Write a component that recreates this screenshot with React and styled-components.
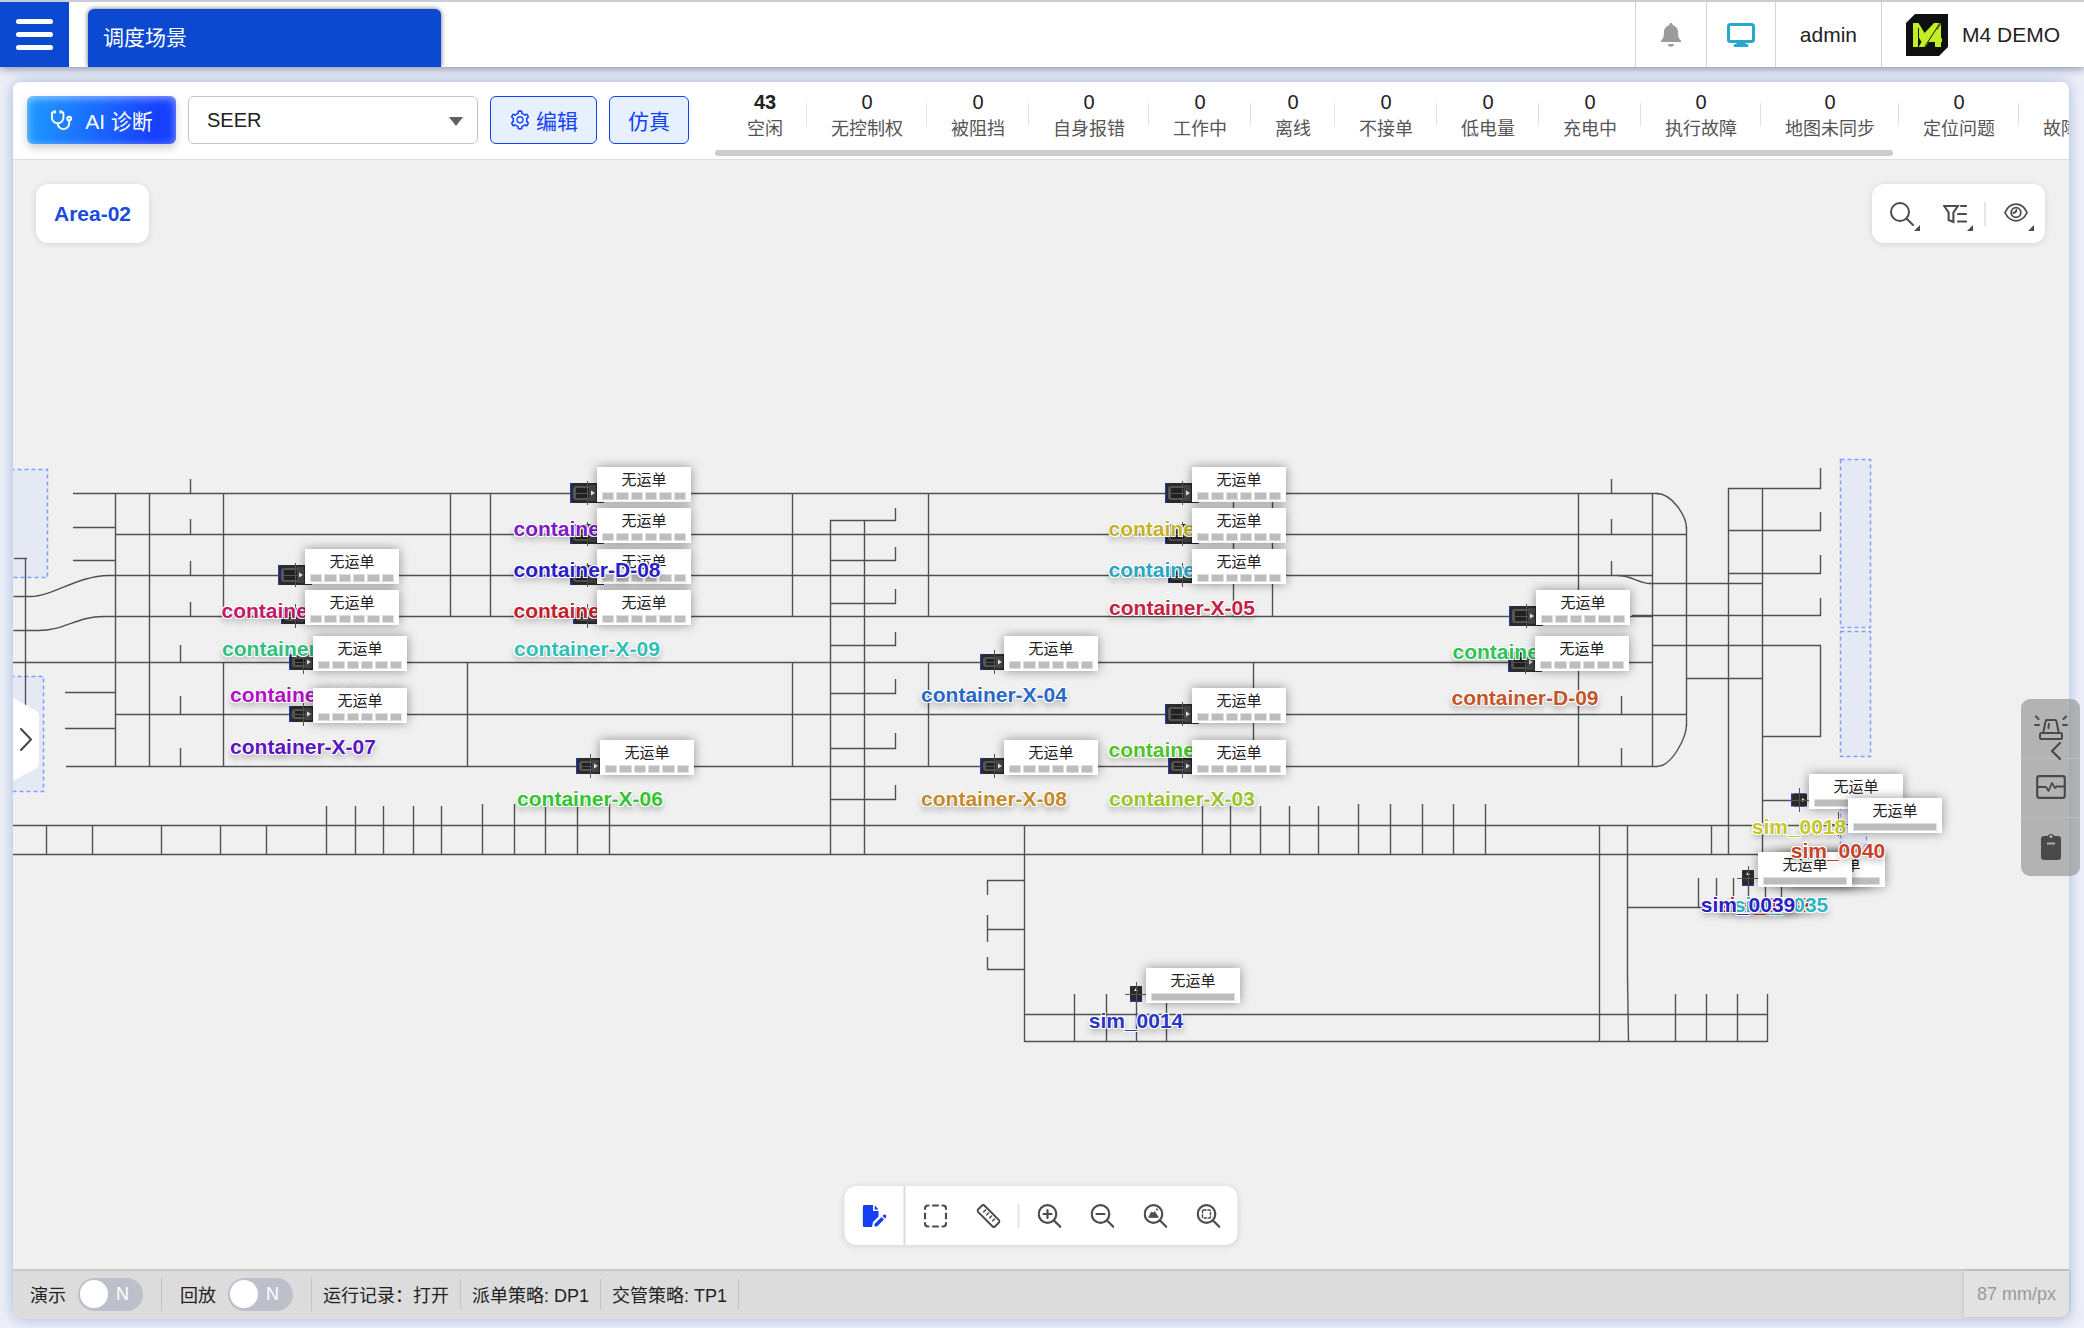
import React from "react";
import styled, { createGlobalStyle, css } from "styled-components";
import { AiOutlineSetting } from "react-icons/ai";
import { LuStethoscope } from "react-icons/lu";

const GlobalStyle = createGlobalStyle`
  *, *::before, *::after { box-sizing: border-box; }
  body {
    margin: 0;
    background: #eeeff8;
    color: #222;
    font-family: "Liberation Sans", Arial, "Noto Sans CJK SC", sans-serif;
  }
  button, select, input { font: inherit; color: inherit; }
  svg { display: block; }
`;

const Page = styled.div`
  min-height: 100vh;
  display: flex;
  flex-direction: column;
`;

/* ---------- header ---------- */

const Header = styled.header`
  display: flex;
  height: 67px;
  flex: none;
  border-top: 2px solid #c9cdd8;
  background: #fff;
  box-shadow: 0 2px 8px rgba(70, 85, 120, 0.6);
`;

const MenuButton = styled.button`
  width: 69px;
  border: 0;
  padding: 0 16px;
  background: #0b49d1;
  display: flex;
  flex-direction: column;
  justify-content: center;
  gap: 8px;
`;

const MenuBar = styled.span`
  display: block;
  height: 5px;
  border-radius: 3px;
  background: #fff;
`;

const SceneTab = styled.a`
  display: flex;
  align-items: center;
  width: 353px;
  margin: 7px auto 0 19px;
  padding: 0 0 4px 15px;
  border-radius: 6px 6px 0 0;
  background: #0b49d1;
  box-shadow: 0 0 5px rgba(0, 0, 0, 0.6);
  clip-path: inset(-6px -6px 0 -6px);
  color: #fff;
  font-size: 21px;
  text-decoration: none;
`;

const HeaderCell = styled.button`
  display: flex;
  align-items: center;
  justify-content: center;
  gap: 14px;
  border: 0;
  border-left: 1px solid #d4d4d4;
  padding: 0 ${(p) => p.$pad}px;
  background: none;
  font-size: 21px;
  white-space: nowrap;
`;

/* ---------- main panel ---------- */

const Panel = styled.main`
  position: relative;
  flex: 1;
  display: flex;
  flex-direction: column;
  margin: 15px 15px 9px 13px;
  border-radius: 8px;
  background: #f0f0f0;
  box-shadow: 0 0 14px rgba(70, 120, 190, 0.45);
`;

const Toolbar = styled.div`
  display: flex;
  height: 78px;
  flex: none;
  align-items: flex-start;
  gap: 12px;
  padding: 14px 0 0 14px;
  border-bottom: 1px solid #dedede;
  border-radius: 8px 8px 0 0;
  background: #fff;
`;

const control = css`
  flex: none;
  height: 48px;
  border-radius: 6px;
  font-size: 21px;
`;

const AiButton = styled.button`
  ${control}
  display: flex;
  align-items: center;
  justify-content: center;
  gap: 12px;
  width: 149px;
  border: 0;
  color: #fff;
  background: linear-gradient(100deg, #1e97ff 5%, #1640ff 85%);
  box-shadow: inset 0 2px 8px rgba(255, 255, 255, 0.55), 0 4px 8px rgba(0, 0, 0, 0.2);
`;

const SelectWrap = styled.div`
  position: relative;
  flex: none;
  width: 290px;

  &::after {
    content: "";
    position: absolute;
    right: 15px;
    top: 21px;
    border: 7px solid transparent;
    border-top: 9px solid #5c5f66;
    border-bottom: 0;
    pointer-events: none;
  }
`;

const SceneSelect = styled.select`
  ${control}
  width: 100%;
  appearance: none;
  padding: 0 18px;
  border: 1px solid #bfc4d0;
  background: #fff;
  font-size: 20px;
`;

const OutlineButton = styled.button`
  ${control}
  display: flex;
  align-items: center;
  justify-content: center;
  gap: 5px;
  padding: 0 18px;
  border: 1px solid #1240f5;
  background: #e7f0ff;
  color: #1240f5;
`;

const StatScroller = styled.div`
  flex: 1;
  min-width: 0;
  height: 76px;
  margin: -14px 0 0 14px;
  padding-top: 7px;
  overflow: hidden;
`;

const StatList = styled.ul`
  display: flex;
  margin: 0;
  padding: 0 0 0 8px;
  list-style: none;
`;

const Stat = styled.li`
  flex: none;
  display: flex;
  flex-direction: column;
  align-items: center;
  padding: 0 24px;
  background: linear-gradient(#e2e2e2, #e2e2e2) right 0 top 14px / 1px 23px no-repeat;
`;

const StatValue = styled.strong`
  font-size: 20px;
  line-height: 26px;
  font-weight: ${(p) => (p.$on ? 700 : 400)};
  color: #222;
`;

const StatName = styled.span`
  font-size: 18px;
  line-height: 29px;
  color: #555;
`;

const ScrollThumb = styled.div`
  width: 87%;
  height: 6px;
  margin-top: 6px;
  border-radius: 3px;
  background: #cdcdcd;
`;

/* ---------- canvas ---------- */

const Canvas = styled.section`
  position: relative;
  flex: 1;
  overflow: hidden;
  background: #f0f0f0;
`;

const Tracks = styled.svg`
  position: absolute;
  inset: 0;
  width: 100%;
  height: 100%;
`;

const Floating = styled.div`
  position: absolute;
  display: flex;
  align-items: center;
  height: 59px;
  border-radius: 12px;
  background: #fff;
  box-shadow: 0 1px 6px rgba(0, 0, 0, 0.12);
`;

const AreaBox = styled(Floating)`
  left: 23px;
  top: 24px;
`;

const AreaButton = styled.button`
  height: 100%;
  border: 0;
  padding: 0 18px;
  background: none;
  color: #1a4be0;
  font-size: 21px;
  font-weight: 700;
`;

const ViewTools = styled(Floating)`
  right: 24px;
  top: 24px;
  padding: 0 3px;
`;

const ZoomTools = styled(Floating)`
  left: 50%;
  bottom: 24px;
  transform: translateX(-50%);
`;

const ToolGroup = styled.div`
  display: flex;
  align-items: center;
  height: 100%;
  padding: 0 3px;

  & + & { border-left: 2px solid #dcdcdc; }
`;

const ToolButton = styled.button`
  position: relative;
  display: grid;
  place-items: center;
  width: 53px;
  height: 53px;
  border: 0;
  padding: 0;
  background: none;
  color: ${(p) => (p.$active ? "#153ff5" : "#4c4c4c")};

  ${(p) =>
    p.$menu &&
    css`
      &::after {
        content: "";
        position: absolute;
        right: 8px;
        bottom: 9px;
        border-left: 6px solid transparent;
        border-bottom: 6px solid #4c4c4c;
      }
    `}
`;

const ToolDivider = styled.span`
  width: 2px;
  height: 24px;
  margin: 0 3px;
  background: #e2e5ea;
`;

const DrawerHandle = styled.button`
  position: absolute;
  left: 0;
  top: 538px;
  width: 26px;
  height: 83px;
  border: 0;
  padding: 0;
  background: none;
`;

const Dock = styled.nav`
  position: absolute;
  right: -11px;
  top: 617px;
  width: 59px;
  border-radius: 9px;
  overflow: hidden;
  background: rgba(150, 150, 150, 0.68);
`;

const DockButton = styled.button`
  display: grid;
  place-items: center;
  width: 100%;
  height: 59px;
  border: 0;
  padding: 0 0 2px;
  background: none;
  color: #4a4a4a;

  & + & { border-top: 1px solid #bdbdbd; }
`;

const DockChevron = styled.svg`
  position: absolute;
  right: 19px;
  top: 43px;
`;

/* ---------- vehicles ---------- */

const Anchor = styled.div`
  position: absolute;
  left: ${(p) => p.$x}px;
  top: ${(p) => p.$y}px;
`;

const VehicleName = styled.span`
  position: absolute;
  top: ${(p) => p.$top}px;
  left: 0;
  transform: translateX(-50%);
  color: ${(p) => p.$color};
  font-size: 21px;
  line-height: 24px;
  font-weight: 700;
  white-space: nowrap;
  text-shadow: 1px 1px 0 #fff, -1px -1px 0 #fff, 1px -1px 0 #fff, -1px 1px 0 #fff,
    0 4px 6px rgba(0, 0, 0, 0.35);
`;

const OrderCard = styled.div`
  position: absolute;
  left: 10px;
  top: -26px;
  width: 94px;
  height: 35px;
  padding: 2px 5px 0;
  background: #fff;
  box-shadow: 0 0 10px rgba(0, 0, 0, 0.4);
  color: #222;
  font-size: 15px;
  line-height: 22px;
  text-align: center;
`;

const Slots = styled.div`
  display: grid;
  grid-template-columns: repeat(${(p) => p.$count}, 1fr);
  gap: 2px;
  margin-top: 1px;
`;

const Slot = styled.span`
  height: 8px;
  border: 1px solid #dedede;
  background: #bdbdbd;
`;

/* ---------- status bar ---------- */

const StatusBar = styled.footer`
  display: flex;
  align-items: center;
  flex: none;
  height: 50px;
  padding: 0 0 2px 17px;
  border-top: 2px solid #c9c9c9;
  border-radius: 0 0 8px 8px;
  background: #dcdcdc;
  font-size: 18px;
`;

const StatusCell = styled.div`
  display: flex;
  align-items: center;
  height: ${(p) => (p.$switch ? 33 : 30)}px;
  padding: 0 ${(p) => (p.$switch ? 18 : 11)}px 0 ${(p) => (p.$first ? 0 : p.$switch ? 18 : 11)}px;
  border-right: 1px solid #c2c2c2;
  white-space: nowrap;
`;

const SwitchLabel = styled.label`
  display: flex;
  align-items: center;
  gap: 12px;
`;

const SwitchTrack = styled.span`
  display: flex;
  align-items: center;
  gap: 8px;
  width: 65px;
  height: 33px;
  padding-left: 2px;
  border-radius: 17px;
  background: #bcc0ca;
  color: #fff;
`;

const SwitchInput = styled.input`
  appearance: none;
  width: 28px;
  height: 28px;
  margin: 0;
  border-radius: 50%;
  background: #fff;
`;

const Scale = styled.output`
  display: flex;
  align-items: center;
  align-self: stretch;
  margin-left: auto;
  padding: 0 13px;
  border-radius: 0 0 8px 0;
  background: #e2e2e2;
  box-shadow: 0 0 4px rgba(0, 0, 0, 0.15);
  color: #999;
`;

/* ---------- icons ---------- */

const stroke = { fill: "none", stroke: "currentColor", strokeLinecap: "round", strokeLinejoin: "round" };

const BellIcon = () => (
  <svg width="22" height="24" viewBox="0 0 22 24" fill="#9b9b9b">
    <path d="M11 0c1 0 1.600.700 1.600 1.600v.700c3.300.700 5.500 3.400 5.500 7.200 0 4.700 1.100 6.500 2.800 8 .500.500.200 1.600-.700 1.600H1.800c-.900 0-1.200-1.100-.700-1.600 1.700-1.500 2.800-3.300 2.800-8 0-3.800 2.200-6.500 5.500-7.200v-.700C9.400.700 10 0 11 0z" />
    <path d="M7.800 21h6.400c0 1.600-1.400 2.800-3.200 2.800S7.800 22.600 7.800 21z" />
  </svg>
);

const MonitorIcon = () => (
  <svg width="28" height="24" viewBox="0 0 28 24" fill="none" stroke="#27a9cf">
    <rect x="1.500" y="1.500" width="25" height="17" rx="2" strokeWidth="3" />
    <path d="M14 19v3M8 22.500h12" strokeWidth="3" strokeLinecap="round" />
    <path d="M9.500 20.500h9" strokeWidth="3" />
  </svg>
);

const LogoIcon = () => (
  <svg width="42" height="42" viewBox="0 0 42 42">
    <path d="M9 0h33v33l-9 9H0V9z" fill="#0d0f10" />
    <path d="M7 33V9h5.500l6 10L28 9h7L19.500 33h-7l3-5-3.500-6v11z" fill="#c3ee26" />
    <path d="M35 10v14h1v4h-1v5h-6v-5h-8l2-4 8-10v10h-2l-3 0" fill="#c3ee26" />
    <path d="M12.500 14v19M34 9 18 34" fill="none" stroke="#0d0f10" />
  </svg>
);

const SearchIcon = () => (
  <svg width="24" height="24" viewBox="0 0 24 24" {...stroke} strokeWidth="2">
    <circle cx="10" cy="10" r="9" />
    <path d="m16.500 16.500 6.500 6.500" />
  </svg>
);

const FilterIcon = () => (
  <svg width="24" height="24" viewBox="0 0 24 24" {...stroke} strokeWidth="2.100" strokeLinejoin="miter">
    <path d="M1.200 4h13.600l-4.400 6.500V20l-4.800-2V10.500z" />
    <path d="M18 4h5M15 12h8M15 19.500h8" />
  </svg>
);

const EyeIcon = () => (
  <svg width="24" height="24" viewBox="0 0 24 24" {...stroke} strokeWidth="1.800">
    <path d="M1 10.500C3.500 5 7.500 2.200 12 2.200s8.500 2.800 11 8.300c-2.500 5.500-6.500 8.300-11 8.300S3.500 16 1 10.500z" />
    <circle cx="12" cy="10.500" r="4.800" />
    <path d="M12.500 8c-.300 1.800-1 2.700-3 3" />
  </svg>
);

const EditFileIcon = () => (
  <svg width="24" height="24" viewBox="0 0 24 24" fill="currentColor">
    <path d="M2 1h8.500v6H16v5.500l-5.500 5.500L9.500 23H2c-1 0-1.800-.8-1.800-1.800V2.800C.2 1.800 1 1 2 1z" />
    <path d="m12.200 1.200 3.800 4.300h-3.800zM12 20l7-7 2.500 2.500-7 7H12zM20 12l1.200-1.200c.5-.5 1.200-.5 1.700 0l.8.8c.5.500.5 1.200 0 1.700l-1.200 1.200z" />
  </svg>
);

const MarqueeIcon = () => (
  <svg width="24" height="24" viewBox="0 0 24 24" {...stroke} strokeWidth="2.200">
    <path d="M1.500 5V4.500a3 3 0 0 1 3-3H5M9.500 1.500h5M19 1.500h.5a3 3 0 0 1 3 3V5M22.500 9.500v5M22.500 19v.5a3 3 0 0 1-3 3H19M14.500 22.500h-5M5 22.500h-.5a3 3 0 0 1-3-3V19M1.500 14.500v-5" />
  </svg>
);

const RulerIcon = () => (
  <svg width="24" height="24" viewBox="0 0 24 24" {...stroke} strokeWidth="2">
    <rect x="0" y="7.500" width="24" height="9" rx="2" transform="rotate(45 12 12)" />
    <path d="m9 6-1.800 1.800M12 9l-1.800 1.800M15 12l-1.800 1.800M18 15l-1.800 1.800" strokeWidth="1.600" />
  </svg>
);

const LensIcon = ({ children }) => (
  <svg width="24" height="24" viewBox="0 0 24 24" {...stroke} strokeWidth="2.200">
    <circle cx="10" cy="10" r="8.800" />
    <path d="m16.500 16.500 6.300 6.300" />
    {children}
  </svg>
);

const AlarmIcon = () => (
  <svg width="34" height="26" viewBox="0 0 34 26" {...stroke} strokeWidth="2">
    <path d="M9.500 16.500 11.500 6.500c.2-1 .9-1.500 1.800-1.500h7.400c.9 0 1.600.5 1.800 1.500l2 10M15 9l-.6 4" />
    <rect x="6" y="18" width="22" height="6" rx="1.500" />
    <path d="M2 1.500 4.500 4M1 10h4M32 1.500 29.500 4M33 10h-4" />
  </svg>
);

const PulseIcon = () => (
  <svg width="30" height="24" viewBox="0 0 30 24" {...stroke} strokeWidth="2.200">
    <rect x="1.200" y="1.200" width="27.600" height="21.600" rx="2" />
    <path d="M2 12h8l2.500 4 3.500-8 3 5 1.500-1.500H28" strokeWidth="1.800" />
  </svg>
);

const ClipboardIcon = () => (
  <svg width="22" height="28" viewBox="0 0 22 28">
    <path d="M4 4h3.500a4 4 0 0 1 7 0H18a3 3 0 0 1 3 3v18a3 3 0 0 1-3 3H4a3 3 0 0 1-3-3V7a3 3 0 0 1 3-3z" fill="currentColor" />
    <path d="M7 11.500h8" stroke="#b0b0b0" strokeWidth="2" />
    <circle cx="11" cy="4.500" r="1.500" fill="#b0b0b0" />
  </svg>
);

/* ---------- data ---------- */

const stats = [
  [43, "空闲"], [0, "无控制权"], [0, "被阻挡"], [0, "自身报错"], [0, "工作中"], [0, "离线"], [0, "不接单"],
  [0, "低电量"], [0, "充电中"], [0, "执行故障"], [0, "地图未同步"], [0, "定位问题"], [0, "故障未恢复"],
];

// World coordinate of the canvas' upper left corner.
const ORIGIN = { x: 13, y: 160 };

// Horizontal lanes: [y, from, to]
const lanes = [
  [493, 73, 1658], [527, 73, 115], [534, 115, 1686], [560, 73, 115], [575, 108, 1652], [616, 103, 1652],
  [662, 13, 1652], [692, 65, 115], [714, 115, 1686], [728, 65, 115], [766, 66, 1656], [558, 14, 26],
  [825, 13, 1840], [854, 13, 1762],
  [520, 830, 895], [560, 830, 895], [603, 830, 895], [645, 830, 895], [693, 830, 895], [748, 830, 895], [799, 830, 895],
  [583, 1649, 1762], [615, 1632, 1820], [488, 1728, 1820], [530, 1728, 1820], [573, 1728, 1820],
  [645, 1652, 1820], [736, 1762, 1820], [678, 1686, 1762], [800, 1762, 1800], [907, 1627, 1782],
  [1014, 1024, 1767], [1041, 1024, 1767], [880, 987, 1024], [929, 987, 1024], [969, 987, 1024],
];

// Vertical lanes: [from, to, ...x]
const aisles = [
  [493, 766, 115, 149, 1652], [493, 616, 223, 450, 490, 792, 928, 1233, 1272, 1578],
  [662, 766, 223, 467, 792, 928, 1253, 1578],
  [479, 493, 190, 1611], [519, 534, 190, 1611], [561, 575, 190, 1611], [602, 616, 190],
  [645, 662, 180], [696, 714, 180, 1621], [748, 766, 180, 1621], [558, 760, 25],
  [825, 854, 46, 92, 161, 220, 266, 1711],
  [806, 854, 326, 355, 383, 413, 441, 1202, 1230, 1260, 1289, 1318],
  [804, 854, 482, 514, 545, 577, 609, 1358, 1390, 1422, 1453, 1485],
  [520, 854, 830, 864], [508, 520, 895], [547, 560, 895], [589, 603, 895], [632, 645, 895],
  [679, 693, 895], [733, 748, 895], [785, 799, 895],
  [825, 1041, 1024, 1599], [825, 976, 1627], [527, 725, 1686], [488, 854, 1728, 1762],
  [468, 488, 1820], [512, 530, 1820], [555, 573, 1820], [598, 615, 1820], [645, 736, 1820],
  [878, 907, 1698, 1716, 1733, 1748, 1765, 1781], [994, 1041, 1074, 1106, 1136, 1166, 1675, 1706, 1737, 1767],
  [880, 894, 987], [915, 941, 987], [957, 969, 987],
];

const bends = [
  "M13 596H30C52 596 78 575 108 575",
  "M13 630H38C64 630 76 616 103 616",
  "M1656 493C1672 493 1686 516 1686 528",
  "M1656 766C1672 766 1686 736 1686 724",
  "M1617 575C1632 575 1638 583 1650 583",
  "M1627 976 1628 1041",
];

const zones = [
  [-4, 469, 51, 108], [-4, 676, 47, 115], [1840, 459, 30, 168], [1840, 631, 30, 125], [1840, 806, 26, 39],
];

// [kind, x, y, name, colour], painted in this order
const vehicles = [
  ["D", 295, 575, "container-D-05", "#c2186b"],
  ["X", 295, 616, "container-X-10", "#2fc07f"],
  ["X", 303, 662, "container-X-02", "#b012c4"],
  ["X", 303, 714, "container-X-07", "#5a17c0"],
  ["D", 587, 493, "container-D-03", "#7d1bc4"],
  ["D", 587, 575, "container-D-07", "#c21f2c"],
  ["D", 587, 534, "container-D-08", "#2a1bc4"],
  ["X", 587, 616, "container-X-09", "#2fbfb6"],
  ["X", 590, 766, "container-X-06", "#35c42f"],
  ["X", 994, 662, "container-X-04", "#2a68c4"],
  ["X", 994, 766, "container-X-08", "#c48a2a"],
  ["D", 1182, 493, "container-D-01", "#c4b22a"],
  ["D", 1182, 534, "container-D-02", "#2aa6c4"],
  ["X", 1182, 575, "container-X-05", "#c41f45"],
  ["D", 1182, 714, "container-D-04", "#4dc42a"],
  ["X", 1182, 766, "container-X-03", "#9ac42a"],
  ["D", 1526, 616, "container-D-06", "#2fc455"],
  ["D", 1525, 662, "container-D-09", "#c4552a"],
  ["V", 1136, 994, "sim_0014", "#2a35c4"],
  ["V", 1765, 878, "sim_0037", "#c4352a"],
  ["V", 1781, 878, "sim_0035", "#2fb4c4"],
  ["V", 1748, 878, "sim_0039", "#2a20c4"],
  ["H", 1799, 800, "sim_0018", "#c4c82a"],
  ["P", 1838, 824, "sim_0040", "#c4432a"],
];

// P is a vehicle known only by its position: it has a cross and no body.
const kinds = {
  D: { w: 34, h: 20, slots: 6, label: 24 },
  X: { w: 28, h: 16, slots: 6, label: 21 },
  H: { w: 16, h: 13, slots: 1, label: 15 },
  V: { w: 16, h: 12, slots: 1, label: 15, turn: -90 },
  P: { w: 0, h: 0, slots: 1, label: 15 },
};

function VehicleBody({ data: [kind, x, y] }) {
  const k = kinds[kind];
  const large = k.slots > 1;
  return (
    <g transform={`translate(${x} ${y})`}>
      {k.w > 0 && (
        <g transform={`rotate(${k.turn || 0})`}>
          <rect x={-k.w / 2} y={-k.h / 2} width={k.w} height={k.h} fill="#2038c0" />
          <rect x={1 - k.w / 2} y={-k.h / 2} width={k.w - 1} height={k.h} rx="3" fill="#2b2b2b" />
          {large && (
            <>
              <rect x={3 - k.w / 2} y={3 - k.h / 2} width={k.w / 2} height={k.h - 6} rx="3" fill="#555" />
              <rect x={6 - k.w / 2} y={5 - k.h / 2} width={k.w / 2 - 3} height={k.h - 10} fill="#222" />
              <path d={`M${6 - k.w / 2} .5H3`} stroke="#555" />
              <rect x="2" y={2 - k.h / 2} width="7" height={k.h - 4} fill="#484848" />
            </>
          )}
          <path d={large ? "M4-2.500 8 0 4 2.500z" : "M3-2 6 0 3 2z"} fill="#eee" />
        </g>
      )}
      <path d={large ? "M.5-12V12" : "M.5-12V12M-11 .5H11"} stroke="#555" strokeWidth="1" />
    </g>
  );
}

function Vehicle({ data: [kind, x, y, name, color] }) {
  const k = kinds[kind];
  return (
    <Anchor $x={x - ORIGIN.x} $y={y - ORIGIN.y}>
      <VehicleName $top={k.label} $color={color}>{name}</VehicleName>
      <OrderCard>
        无运单
        <Slots $count={k.slots}>
          {Array.from({ length: k.slots }, (_, i) => <Slot key={i} />)}
        </Slots>
      </OrderCard>
    </Anchor>
  );
}

function MapTracks() {
  return (
    <Tracks aria-hidden="true">
      <g transform={`translate(${-ORIGIN.x} ${-ORIGIN.y})`}>
        {zones.map(([x, y, w, h]) => (
          <rect key={`${x}-${y}`} x={x + 0.5} y={y + 0.5} width={w} height={h}
            fill="#e5e9f3" stroke="#7f9cff" strokeWidth="1.500" strokeDasharray="4 3" />
        ))}
        <g fill="none" stroke="#505050" strokeWidth="1.400">
          {lanes.map(([y, a, b]) => <path key={`${y}-${a}`} d={`M${a} ${y + 0.5}H${b + 1}`} />)}
          {aisles.flatMap(([a, b, ...xs]) =>
            xs.map((x) => <path key={`${x}-${a}`} d={`M${x + 0.5} ${a}V${b + 1}`} />)
          )}
          <g transform="translate(.5 .5)">
            {bends.map((d) => <path key={d} d={d} />)}
          </g>
        </g>
        {vehicles.map((v) => <VehicleBody key={v[3]} data={v} />)}
      </g>
    </Tracks>
  );
}

function Switch({ id, label }) {
  return (
    <SwitchLabel htmlFor={id}>
      {label}
      <SwitchTrack>
        <SwitchInput id={id} type="checkbox" role="switch" />
        N
      </SwitchTrack>
    </SwitchLabel>
  );
}

export default function App() {
  return (
    <Page>
      <GlobalStyle />
      <Header>
        <MenuButton aria-label="菜单"><MenuBar /><MenuBar /><MenuBar /></MenuButton>
        <SceneTab href="#scene">调度场景</SceneTab>
        <HeaderCell $pad={24} aria-label="通知"><BellIcon /></HeaderCell>
        <HeaderCell $pad={20} aria-label="监控"><MonitorIcon /></HeaderCell>
        <HeaderCell $pad={24}>admin</HeaderCell>
        <HeaderCell $pad={24}><LogoIcon />M4 DEMO</HeaderCell>
      </Header>

      <Panel>
        <Toolbar>
          <AiButton><LuStethoscope size={23} />AI 诊断</AiButton>
          <SelectWrap>
            <SceneSelect aria-label="场景" defaultValue="SEER">
              <option>SEER</option>
            </SceneSelect>
          </SelectWrap>
          <OutlineButton><AiOutlineSetting size={22} />编辑</OutlineButton>
          <OutlineButton>仿真</OutlineButton>
          <StatScroller>
            <StatList>
              {stats.map(([value, name]) => (
                <Stat key={name}>
                  <StatValue $on={value > 0}>{value}</StatValue>
                  <StatName>{name}</StatName>
                </Stat>
              ))}
            </StatList>
            <ScrollThumb />
          </StatScroller>
        </Toolbar>

        <Canvas>
          <MapTracks />
          {vehicles.map((v) => <Vehicle key={v[3]} data={v} />)}

          <AreaBox><AreaButton>Area-02</AreaButton></AreaBox>

          <ViewTools>
            <ToolButton $menu aria-label="搜索"><SearchIcon /></ToolButton>
            <ToolButton $menu aria-label="筛选"><FilterIcon /></ToolButton>
            <ToolDivider />
            <ToolButton $menu aria-label="显示"><EyeIcon /></ToolButton>
          </ViewTools>

          <DrawerHandle aria-label="展开">
            <svg width="26" height="83" viewBox="0 0 26 83">
              <path d="M0 0 22 12q4 2 4 6v47q0 4-4 6L0 83z" fill="#fff" />
              <path d="m8 31 10 10.500L8 52" {...stroke} stroke="#444" strokeWidth="2" />
            </svg>
          </DrawerHandle>

          <ZoomTools>
            <ToolGroup>
              <ToolButton $active aria-label="编辑"><EditFileIcon /></ToolButton>
            </ToolGroup>
            <ToolGroup>
              <ToolButton aria-label="框选"><MarqueeIcon /></ToolButton>
              <ToolButton aria-label="测距"><RulerIcon /></ToolButton>
              <ToolDivider />
              <ToolButton aria-label="放大"><LensIcon><path d="M10 6v8M6 10h8" /></LensIcon></ToolButton>
              <ToolButton aria-label="缩小"><LensIcon><path d="M6 10h8" /></LensIcon></ToolButton>
              <ToolButton aria-label="适应地图">
                <LensIcon>
                  <path d="m5.500 13 2.500-5 2 1.500L11 7.500l3.500 5.500z" fill="currentColor" strokeWidth="1" />
                  <path d="M13.500 5.500v.1" />
                </LensIcon>
              </ToolButton>
              <ToolButton aria-label="适应选区">
                <LensIcon><rect x="6" y="6" width="8" height="8" rx="1" strokeWidth="1.400" strokeDasharray="2.600 1.800" /></LensIcon>
              </ToolButton>
            </ToolGroup>
          </ZoomTools>
        </Canvas>

        <StatusBar>
          <StatusCell $switch $first><Switch id="demo" label="演示" /></StatusCell>
          <StatusCell $switch><Switch id="replay" label="回放" /></StatusCell>
          <StatusCell>运行记录：打开</StatusCell>
          <StatusCell>派单策略: DP1</StatusCell>
          <StatusCell>交管策略: TP1</StatusCell>
          <Scale>87 mm/px</Scale>
        </StatusBar>

        <Dock>
          <DockButton aria-label="告警"><AlarmIcon /></DockButton>
          <DockButton aria-label="监测"><PulseIcon /></DockButton>
          <DockButton aria-label="任务"><ClipboardIcon /></DockButton>
          <DockChevron width="10" height="18" viewBox="0 0 10 18" {...stroke} stroke="#444" strokeWidth="2">
            <path d="M9 1 1 9l8 8" />
          </DockChevron>
        </Dock>
      </Panel>
    </Page>
  );
}
